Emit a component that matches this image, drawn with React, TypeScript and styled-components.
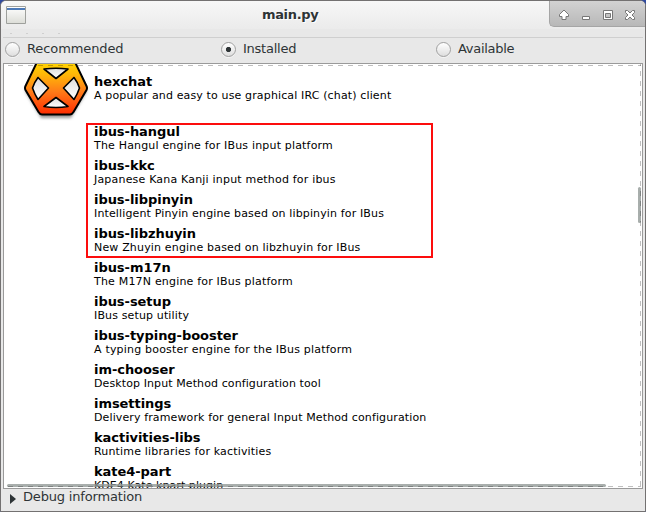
import React from "react";
import styled, { createGlobalStyle } from "styled-components";

const Global = createGlobalStyle`
  * { box-sizing: border-box; }
  body { margin: 0; background: #2f4aa0; overflow: hidden; font-family: "DejaVu Sans", sans-serif; }
`;

const Window = styled.div`
  position: relative;
  width: 646px;
  height: 512px;
  display: flex;
  flex-direction: column;
  background: #e8e8e8;
  border: 1px solid #737171;
  border-radius: 6px 6px 0 0;
  overflow: hidden;
`;

const TitleBar = styled.header`
  height: 28px;
  flex: none;
  display: flex;
  background: linear-gradient(#f7f7f7, #ebebeb);
`;

const AppIcon = styled.svg`
  flex: none;
  margin: 5px 0 0 5px;
`;

const Title = styled.h1`
  flex: 1;
  margin: 0;
  padding: 5px 0 0 236px;
  font-size: 13px;
  line-height: 17px;
  font-weight: bold;
  letter-spacing: -0.35px;
  color: #2e3436;
  text-shadow: 1px 1px #fff;
`;

const Controls = styled.div`
  width: 96px;
  height: 26px;
  border-left: 1px solid #a5a5a5;
  border-bottom: 1px solid #a5a5a5;
  border-bottom-left-radius: 5px;
  background: linear-gradient(#d2d2d2, #b8b8b8);
`;

const MenuStrip = styled.div`
  height: 9px;
  flex: none;
  margin: 0 2px;
  padding: 4px 0 0 7px;
  display: flex;
  gap: 14px;
  border-bottom: 1px solid #cfcfcf;
`;

const MenuMark = styled.i`
  width: 2px;
  height: 1px;
  background: #cfcfcf;
`;

const Filters = styled.div`
  height: 25px;
  flex: none;
  display: grid;
  grid-template-columns: 216px 215px 1fr;
  padding-left: 4px;
`;

const Option = styled.label<{ $tracking: number }>`
  display: flex;
  gap: 7px;
  font-size: 13px;
  line-height: 22px;
  letter-spacing: ${(p) => p.$tracking}px;
  color: #2e3436;
`;

const Radio = styled.span<{ $on?: boolean }>`
  width: 15px;
  height: 15px;
  margin-top: 4px;
  border: 1px solid #a0a0a0;
  border-radius: 50%;
  background: ${(p) => (p.$on ? "radial-gradient(circle, #2e3436 0 2.2px, transparent 3px)," : "")}
    linear-gradient(#ffffff, #dedede);
  box-shadow: 0 1px #f4f4f4;
`;

const Frame = styled.main`
  position: relative;
  height: 426px;
  flex: none;
  margin: 0 2px;
  border: 1px solid #9a9a9a;
  background: #fff;
  overflow: hidden;
`;

const Overlay = styled.svg`
  position: absolute;
  inset: 0;
`;

const List = styled.ul`
  margin: 0;
  padding: 0;
  list-style: none;
`;

const Item = styled.li<{ $tall?: boolean }>`
  height: ${(p) => (p.$tall ? 59 : 34)}px;
  display: grid;
  grid-template-columns: 90px 1fr;
  padding-top: ${(p) => (p.$tall ? 9 : 0)}px;
`;

const Logo = styled.svg`
  margin: -9px 0 0 18px;
`;

const Entry = styled.div`
  grid-column: 2;
  white-space: nowrap;
  color: #000;
`;

const Name = styled.div`
  font-size: 13px;
  line-height: 17px;
  font-weight: bold;
  letter-spacing: -0.05px;
`;

const Summary = styled.div<{ $tracking: number }>`
  margin-top: -2px;
  font-size: 11px;
  line-height: 15px;
  letter-spacing: ${(p) => p.$tracking}px;
`;

const Highlight = styled.div`
  position: absolute;
  left: 82px;
  top: 59px;
  width: 347px;
  height: 135px;
  border: 2px solid #fc0d0d;
`;

const Footer = styled.footer`
  display: flex;
  gap: 7px;
  padding-left: 9px;
  font-size: 13px;
  line-height: 15px;
  letter-spacing: -0.17px;
  color: #2e3436;
`;

const Arrow = styled.svg`
  margin-top: 5px;
`;

const packages: [string, string, number][] = [
  ["hexchat", "A popular and easy to use graphical IRC (chat) client", 0.14],
  ["ibus-hangul", "The Hangul engine for IBus input platform", 0.18],
  ["ibus-kkc", "Japanese Kana Kanji input method for ibus", 0.19],
  ["ibus-libpinyin", "Intelligent Pinyin engine based on libpinyin for IBus", 0.14],
  ["ibus-libzhuyin", "New Zhuyin engine based on libzhuyin for IBus", 0.17],
  ["ibus-m17n", "The M17N engine for IBus platform", 0.19],
  ["ibus-setup", "IBus setup utility", 0.14],
  ["ibus-typing-booster", "A typing booster engine for the IBus platform", 0.19],
  ["im-chooser", "Desktop Input Method configuration tool", 0.1],
  ["imsettings", "Delivery framework for general Input Method configuration", 0.12],
  ["kactivities-libs", "Runtime libraries for kactivities", 0.17],
  ["kate4-part", "KDE4 Kate kpart plugin", 0.06],
];

const HexLogo = () => (
  <Logo width="68" height="59" viewBox="0 0 68 59">
    <defs>
      <linearGradient id="hex" x1="0" y1="0" x2="0" y2="1">
        <stop offset="0" stopColor="#ffe000" />
        <stop offset="0.3" stopColor="#ffb608" />
        <stop offset="0.6" stopColor="#ff7a18" />
        <stop offset="1" stopColor="#ff2c00" />
      </linearGradient>
      <linearGradient id="hole" x1="0" y1="0" x2="0" y2="1">
        <stop offset="0" stopColor="#dedede" />
        <stop offset="1" stopColor="#fff" />
      </linearGradient>
      <filter id="soft" x="-20%" y="-20%" width="140%" height="150%">
        <feGaussianBlur stdDeviation="1.8" />
      </filter>
    </defs>
    <path d="M19 0H49L65 27 49 54H19L3 27Z" fill="#999" filter="url(#soft)" />
    <path d="M19 -6H49Q51 -6 52 -4L64.500 22Q65.500 24 64.500 26L51.500 48Q50 50.500 48 50.500H20Q18 50.500 16.500 48L3.500 26Q2.500 24 3.500 22L16 -4Q17 -6 19 -6Z" fill="url(#hex)" stroke="#000" strokeWidth="2" />
    <g fill="url(#hole)" stroke="#000" strokeWidth="1.6" strokeLinejoin="round">
      <path d="M22 5Q34 3.500 46 5L34 14.500Z" />
      <path d="M22 42.500Q34 44.500 46 42.500L34 33.500Z" />
      <path d="M16 13.500L26.500 24 16 35.500Q12.500 30 10.500 24 12.500 18 16 13.500Z" />
      <path d="M52 13.500L41.500 24 52 35.500Q55.500 30 57.500 24 55.500 18 52 13.500Z" />
    </g>
  </Logo>
);

export default function App() {
  return (
    <>
      <Global />
      <Window>
        <TitleBar>
          <AppIcon width="20" height="18" viewBox="0 0 20 18">
            <defs>
              <linearGradient id="pane" x1="0" y1="0" x2="0" y2="1">
                <stop offset="0" stopColor="#fff" />
                <stop offset="1" stopColor="#dcddd7" />
              </linearGradient>
            </defs>
            <path d="M.5.5h19v17H.5z" fill="url(#pane)" stroke="#9ea09c" />
            <path d="M1 2h18v2H1z" fill="#4d7ab8" />
          </AppIcon>
          <Title>main.py</Title>
          <Controls>
            <svg width="95" height="25" viewBox="0 0 95 25">
              <g fill="#fff" stroke="#777" strokeWidth="1">
                <path d="M14 9L18.500 13.500V15.500H16V18.500H12V15.500H9.500V13.500Z" />
                <path d="M32.500 15.500h7v3h-7z" />
                <path d="M53.500 9.500h9v9h-9zM55.500 12.500v4h5v-4z" fillRule="evenodd" />
                <path d="M75.500 9.500h2l2.500 2.500 2.500-2.500h2v2l-2.500 2.500 2.500 2.500v2h-2l-2.500-2.500-2.500 2.500h-2v-2l2.500-2.500-2.500-2.500z" />
              </g>
            </svg>
          </Controls>
        </TitleBar>
        <MenuStrip>
          <MenuMark />
          <MenuMark />
          <MenuMark />
          <MenuMark />
        </MenuStrip>
        <Filters>
          <Option $tracking={-0.1}><Radio />Recommended</Option>
          <Option $tracking={-0.25}><Radio $on />Installed</Option>
          <Option $tracking={-0.3}><Radio />Available</Option>
        </Filters>
        <Frame>
          <List>
            {packages.map(([name, summary, tracking], i) => (
              <Item key={name} $tall={i === 0}>
                {i === 0 && <HexLogo />}
                <Entry>
                  <Name>{name}</Name>
                  <Summary $tracking={tracking}>{summary}</Summary>
                </Entry>
              </Item>
            ))}
          </List>
          <Highlight />
          <Overlay width="638" height="424">
            <rect x="3" y="420" width="599" height="3" rx="1.500" fill="#929a97" fillOpacity="0.8" />
            <rect x="634" y="123" width="3" height="36" rx="1.500" fill="#929a97" fillOpacity="0.8" />
            <g stroke="#000" strokeOpacity="0.25" strokeDasharray="5 5">
              <path d="M4 1.500H637" />
              <path d="M4 422.500H637" />
              <path d="M636.500 -3V422" />
            </g>
          </Overlay>
        </Frame>
        <Footer>
          <Arrow width="6" height="10"><path d="M0 0L6 5 0 10Z" fill="#2e3436" /></Arrow>
          Debug information
        </Footer>
      </Window>
    </>
  );
}
